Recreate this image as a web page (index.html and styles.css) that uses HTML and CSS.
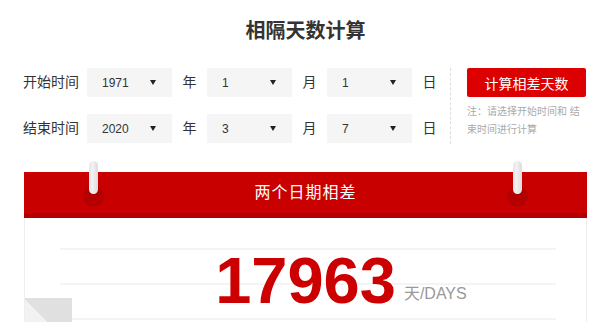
FILE: index.html
```html
<!DOCTYPE html>
<html lang="zh-CN">
<head>
<meta charset="utf-8">
<title>相隔天数计算</title>
<link rel="stylesheet" href="styles.css">
</head>
<body>
<div class="page">
  <h1 class="title">相隔天数计算</h1>
  <div class="form">
    <div class="rows">
      <div class="row">
        <span class="label">开始时间</span>
        <div class="sel">1971<i class="arrow"></i></div>
        <span class="unit">年</span>
        <div class="sel">1<i class="arrow"></i></div>
        <span class="unit">月</span>
        <div class="sel">1<i class="arrow"></i></div>
        <span class="unit">日</span>
      </div>
      <div class="row">
        <span class="label">结束时间</span>
        <div class="sel">2020<i class="arrow"></i></div>
        <span class="unit">年</span>
        <div class="sel">3<i class="arrow"></i></div>
        <span class="unit">月</span>
        <div class="sel">7<i class="arrow"></i></div>
        <span class="unit">日</span>
      </div>
    </div>
    <div class="divider"></div>
    <div class="side">
      <button class="calc">计算相差天数</button>
      <p class="note">注：请选择开始时间和 结束时间进行计算</p>
    </div>
  </div>
  <div class="calendar">
    <div class="bar">
      <span class="ring ring-l"></span><span class="pin pin-l"></span>
      <span class="bar-text">两个日期相差</span>
      <span class="ring ring-r"></span><span class="pin pin-r"></span>
    </div>
    <div class="sheet">
      <div class="ruled">
        <div class="count"><span class="num">17963<span class="days">天/DAYS</span></span></div>
      </div>
      <div class="fold"></div>
    </div>
  </div>
</div>
</body>
</html>
```
FILE: styles.css
```css
html, body {
  margin: 0;
  padding: 0;
  background: #fff;
  height: 100%;
  overflow: hidden;
}
body {
  font-family: "Liberation Sans", "Noto Sans CJK SC", sans-serif;
  color: #333;
}
.page {
  padding: 0 13px 0 24px;
}
.title {
  margin: 0;
  padding-top: 17px;
  font-size: 20px;
  line-height: 28px;
  font-weight: bold;
  text-align: center;
  color: #333;
}
.form {
  display: flex;
  align-items: flex-start;
  margin-top: 23px;
}
.rows {
  display: flex;
  flex-direction: column;
  gap: 17px;
}
.row {
  display: flex;
  align-items: center;
  height: 29px;
}
.label {
  width: 64px;
  font-size: 14px;
  line-height: 29px;
  margin-left: -1px;
  padding-right: 1px;
  box-sizing: border-box;
}
.sel {
  width: 85px;
  height: 29px;
  background: #f5f5f5;
  box-sizing: border-box;
  padding: 0 16px 0 15px;
  display: flex;
  align-items: center;
  justify-content: space-between;
  font-size: 12px;
  color: #333;
}
.arrow {
  width: 0;
  height: 0;
  border-left: 3px solid transparent;
  border-right: 3px solid transparent;
  border-top: 5px solid #222;
}
.unit {
  width: 35px;
  text-align: center;
  font-size: 14px;
  line-height: 29px;
}
.divider {
  width: 0;
  height: 76px;
  border-left: 1px dashed #ddd;
  margin-left: 3px;
}
.side {
  margin-left: 16px;
  width: 119px;
}
.calc {
  display: block;
  width: 119px;
  height: 29px;
  border: 0;
  border-radius: 2px;
  background: #dd0000;
  color: #fff;
  font-family: "Liberation Sans", "Noto Sans CJK SC", sans-serif;
  font-size: 14px;
  padding: 0;
  cursor: pointer;
}
.note {
  margin: 6px 0 0;
  font-size: 10px;
  line-height: 18px;
  color: #aaa;
}
.calendar {
  margin-top: 28px;
}
.bar {
  position: relative;
  height: 46px;
  background: #c90000;
  border-bottom: 5px solid #b20000;
  box-sizing: border-box;
  display: flex;
  align-items: center;
  justify-content: center;
}
.bar-text {
  color: #fff;
  font-size: 16px;
  letter-spacing: 1px;
  line-height: 20px;
  padding-top: 1px;
}
.ring {
  position: absolute;
  top: 14px;
  width: 21px;
  height: 21px;
  border-radius: 50%;
  background: #b40000;
}
.ring-l { left: 59px; }
.ring-r { right: 59px; }
.pin {
  position: absolute;
  top: -11px;
  width: 9px;
  height: 33px;
  border-radius: 5px;
  background: linear-gradient(to right, #e6e6e6, #f2f2f2 40%, #dcdcdc);
}
.pin-l { left: 65px; }
.pin-r { right: 65px; }
.sheet {
  position: relative;
  height: 105px;
  box-sizing: border-box;
  overflow: hidden;
  border-left: 1px solid #eee;
  border-right: 1px solid #eee;
  padding-top: 30px;
  background: #fff;
}
.ruled {
  margin: 0 30px 0 35px;
  height: 75px;
  background: repeating-linear-gradient(to bottom, #f4f4f4 0, #f4f4f4 2px, transparent 2px, transparent 35px);
}
.count {
  text-align: center;
  margin-left: -35px;
  margin-right: -30px;
  font-size: 65px;
  line-height: 65px;
  font-weight: bold;
  color: #cc0000;
}
.num {
  position: relative;
  display: inline-block;
}
.days {
  position: absolute;
  left: 100%;
  bottom: 11px;
  margin-left: 8px;
  white-space: nowrap;
  font-size: 16px;
  line-height: 16px;
  font-weight: normal;
  color: #999;
}
.fold {
  position: absolute;
  left: -1px;
  top: 80px;
  width: 48px;
  height: 48px;
  background: linear-gradient(to top right, #f2f2f2 50%, #e0e0e0 50%);
}
```
